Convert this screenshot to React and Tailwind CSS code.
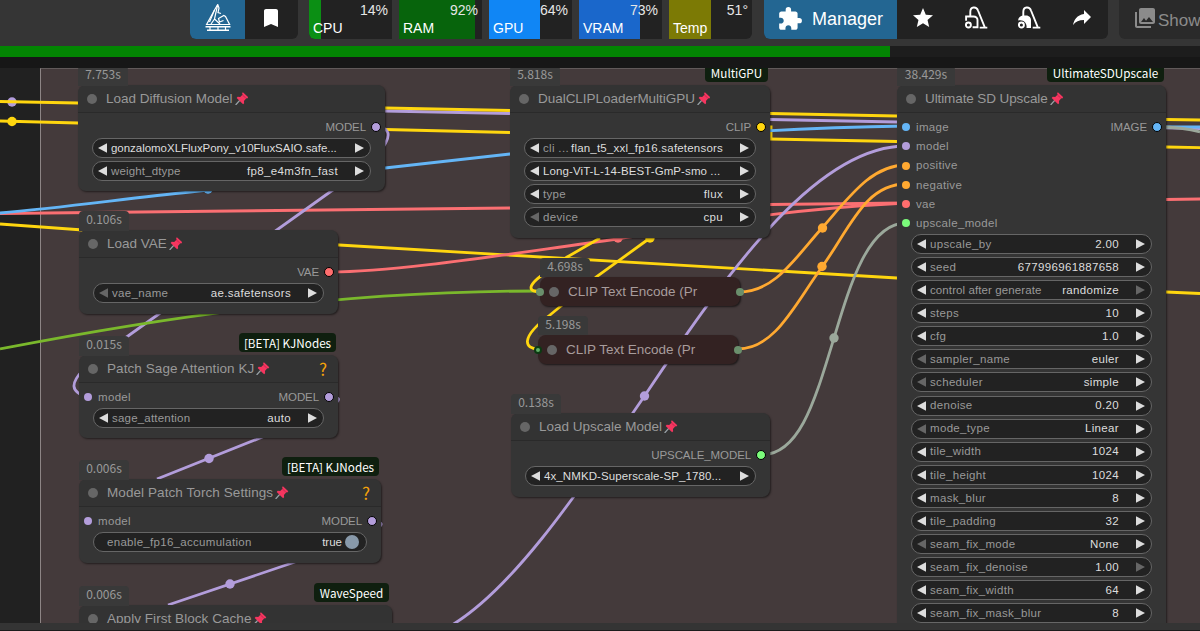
import clsx from "clsx";
import { MdBookmark, MdExtension, MdPhotoLibrary, MdStar } from "react-icons/md";

const monitors = [
  { label: "CPU", value: "14%", fill: 14, color: "bg-[#0b8f14]" },
  { label: "RAM", value: "92%", fill: 92, color: "bg-[#07640c]" },
  { label: "GPU", value: "64%", fill: 61, color: "bg-[#1086f5]" },
  { label: "VRAM", value: "73%", fill: 73, color: "bg-[#1a67cb]" },
  { label: "Temp", value: "51°", fill: 51, color: "bg-[#7c7a05]" },
];

const upscaleInputs = [
  ["image", "bg-[#64b5f6]"],
  ["model", "bg-[#b39ddb]"],
  ["positive", "bg-[#ffa931]"],
  ["negative", "bg-[#ffa931]"],
  ["vae", "bg-[#ff6e6e]"],
  ["upscale_model", "bg-[#7bfb7b]"],
];

const upscaleWidgets = [
  { label: "upscale_by", value: "2.00" },
  { label: "seed", value: "677996961887658" },
  { label: "control after generate", value: "randomize", rightOff: true, labelClass: "tracking-[0.1px]" },
  { label: "steps", value: "10" },
  { label: "cfg", value: "1.0" },
  { label: "sampler_name", value: "euler", leftOff: true },
  { label: "scheduler", value: "simple", leftOff: true },
  { label: "denoise", value: "0.20" },
  { label: "mode_type", value: "Linear", leftOff: true },
  { label: "tile_width", value: "1024" },
  { label: "tile_height", value: "1024" },
  { label: "mask_blur", value: "8" },
  { label: "tile_padding", value: "32" },
  { label: "seam_fix_mode", value: "None", leftOff: true },
  { label: "seam_fix_denoise", value: "1.00", rightOff: true },
  { label: "seam_fix_width", value: "64" },
  { label: "seam_fix_mask_blur", value: "8" },
];

const YELLOW = "#ffd60f";
const PURPLE = "#b39ddb";
const BLUE = "#64b5f6";
const RED = "#fb6f72";
const ORANGE = "#ffa931";
const GREEN = "#7ab82c";
const GRAY = "#9ba89b";

// canvas links, back to front
const links = [
  [PURPLE, "M200 108 L385 111 L510 113.5 L770 119.5 L897 122 L1200 128.5"],
  [YELLOW, "M0 101.5 L78 103 L385 108 L510 110.5 L770 113.5 L897 116 L1166 119.5 L1200 120"],
  [YELLOW, "M0 121 L78 123 L385 129.5 L510 132.5 L770 139 L897 141.5 L1166 147 L1200 147.7"],
  [YELLOW, "M761 127 H771 V138"],
  [RED, "M0 213.5 L510 208 L770 204.5 L906 203"],
  [RED, "M1166 199.5 L1200 199"],
  [BLUE, "M0 213 C60 208 130 198 190 192 L208 190 L385 168 L510 154 C600 144 740 128 906 126"],
  [YELLOW, "M0 224 L83 230 L339 245 L897 278 L1166 292 L1200 293.5"],
  [RED, "M330 272 C400 272 520 252 618 239 C700 226 770 210 906 203"],
  [PURPLE, "M376 127 C397 127 396 148 330 192 L128 336 C98 356 50 388 88 397"],
  [GREEN, "M0 349 C150 320 330 291 540 291"],
  [PURPLE, "M330 397 C350 397 338 407 260 438 L157 479"],
  [PURPLE, "M373 522 C393 522 380 532 292 563 L168 605"],
  [PURPLE, "M452 625 C510 590 570 505 644.5 396 C735 260 820 146 906 146"],
  [YELLOW, "M600 238 L566.7 257.3 L545 273 C525 287 529 292 541 291.7"],
  [YELLOW, "M650 238 L596.7 276.7 L550 315 C519 338 525 349 538 349"],
  [ORANGE, "M739 292 C775 292 795 258 822 228 C850 196 872 165 906 165"],
  [ORANGE, "M738 349 C775 349 795 304 822 267 C850 228 865 184 906 184"],
  [GRAY, "M761 455 C800 455 815 400 834 338 C850 285 868 223 906 223"],
  [BLUE, "M1157 127 H1200"],
  [GRAY, "M1157 127 C1180 127 1190 129 1200 132"],
];

const linkDots = [
  [YELLOW, 12, 121.5],
  [BLUE, 208, 189],
  [RED, 618, 238],
  [YELLOW, 650, 238],
  [PURPLE, 209, 458.5],
  [PURPLE, 230, 584],
  [PURPLE, 644.5, 396],
  [ORANGE, 822.5, 228],
  [ORANGE, 822, 266.5],
  [GRAY, 834, 338],
];

const Pin = () => (
  <svg viewBox="0 0 13 13" className="ml-0.5 size-[13.5px] shrink-0">
    <path d="M0.6 12.4 L5 7.6" stroke="#9aa3a8" strokeWidth="1.3" />
    <path
      d="M7.6 0.3 L12.8 5 L11.8 6.2 L10.9 6 L8.6 8.6 L8.8 10.8 L7.8 11.8 L1.6 5.7 L2.6 4.6 L5 4.8 L7.4 2.5 L6.8 1.2 Z"
      fill="#f5365f"
    />
    <path d="M7 2.8 L10.3 5.7" stroke="#b81e4b" strokeWidth="0.7" />
  </svg>
);

const Arrow = ({ right, off }) => (
  <svg viewBox="0 0 9 10" className="h-2.5 w-[9px] shrink-0">
    <path d={right ? "M0 0.2 L9 5 L0 9.8 Z" : "M9 0.2 L0 5 L9 9.8 Z"} fill={off ? "#666" : "#ddd"} />
  </svg>
);

const pill = "flex h-[20px] -mb-[0.75px] items-center rounded-full border border-[#666] bg-[#222]";

const Widget = ({ label, value, leftOff, rightOff, labelClass = "tracking-[0.33px]", valueClass = "tracking-[0.35px]" }) => (
  <div className={clsx(pill, "pr-1.5 pl-[5px]")}>
    <Arrow off={leftOff} />
    {label && <span className={clsx("ml-1 pt-px text-[#999]", labelClass)}>{label}</span>}
    <span className={clsx("mr-[17px] pt-px text-[#ddd]", label ? "ml-auto" : "ml-1 min-w-0 flex-1", valueClass)}>
      {value}
    </span>
    <Arrow right off={rightOff} />
  </div>
);

const Slots = ({ input, inputColor, output, outputColor }) => (
  <div className="flex h-[19.25px] items-center px-[5px] text-[#999]">
    {input && (
      <>
        <span className={clsx("size-2 rounded-full", inputColor)} />
        <span className="ml-1.5 pt-px tracking-[0.33px]">{input}</span>
      </>
    )}
    {output && (
      <>
        <span className="mr-[5px] ml-auto pt-px tracking-[-0.1px]">{output}</span>
        <span className={clsx("-mr-px size-2.5 rounded-full border border-black", outputColor)} />
      </>
    )}
  </div>
);

const Badge = ({ className, children }) => (
  <div
    className={clsx(
      "absolute flex h-[19px] items-center justify-center rounded-[4px] bg-[#0f1f0f] font-['Noto_Sans_CJK_SC',sans-serif] text-[11.7px] whitespace-nowrap text-white",
      className
    )}
  >
    {children}
  </div>
);

const Node = ({ className, time, timeClass = "w-[50px]", badge, badgeClass, title, titleClass, help, children }) => (
  <section
    className={clsx(
      "absolute rounded-lg bg-[#353535] text-[11.5px] leading-none whitespace-nowrap shadow-[1px_1px_2px_rgba(0,0,0,0.5)]",
      className
    )}
  >
    <div
      className={clsx(
        "absolute -top-[19px] left-0 flex h-5 items-center justify-center rounded-t-[4px] bg-[#393939] pb-[5px] font-['Noto_Sans_CJK_SC',sans-serif] text-[12px] text-[#999]",
        timeClass
      )}
    >
      {time}
    </div>
    {badge && <Badge className={clsx("-top-[22px]", badgeClass)}>{badge}</Badge>}
    <header className="flex h-7 items-center rounded-t-lg border-b border-[#2a2a2a] bg-[#333] pl-[9px]">
      <span className="size-2.5 shrink-0 rounded-full bg-[#666]" />
      <span className={clsx("ml-[9px] pt-px text-[13.5px] text-[#999]", titleClass)}>{title}</span>
      <Pin />
      {help && (
        <span className="mr-[11px] ml-auto font-['Noto_Sans_CJK_SC',sans-serif] text-[17px] text-[#f5a30a]">?</span>
      )}
    </header>
    <div className="pt-[4.5px]">{children}</div>
  </section>
);

const Widgets = ({ children }) => <div className="flex flex-col gap-[3.84px] px-3.5 pt-px">{children}</div>;

const EncodeNode = ({ className, time, ring }) => (
  <section className={clsx("absolute h-[29px] w-[200px] rounded-lg bg-[#332222] shadow-[1px_1px_2px_rgba(0,0,0,0.6)]", className)}>
    <div className="absolute -top-[19px] left-0 flex h-[19px] w-[50px] items-center justify-center rounded-t-[4px] bg-[#393939] pb-[3px] font-['Noto_Sans_CJK_SC',sans-serif] text-[12px] leading-none text-[#999]">
      {time}
    </div>
    <div className="flex h-full items-center">
      <span
        className={clsx(
          "-ml-1 size-2 shrink-0 rounded-full",
          ring ? "border-2 border-[#0c3a12] bg-[#5fae66]" : "bg-[#6a8f6c]"
        )}
      />
      <span className="ml-[5px] size-2.5 shrink-0 rounded-full bg-[#666]" />
      <span className="ml-[9px] pt-px text-[13.5px] leading-none text-[#a79c9c]">CLIP Text Encode (Pr</span>
      <span className="-mr-1 ml-auto size-2 shrink-0 rounded-full bg-[#6a8f6c]" />
    </div>
  </section>
);

const Vacuum = ({ filled }) => (
  <svg viewBox="0 0 24 24" className="size-6" fill="none" stroke="#fff" strokeWidth="1.9">
    <path d="M6.3 10 V6 C6.3 0.4 12.4 0.2 14 4.5 L20.8 21.4 M15.7 21.6 H23.3" />
    {filled ? (
      <path d="M1.2 14.500 C1.2 11 4 9.5 7 9.5 H9 C12.500 9.500 14 12 14 14 V22 H9.500 C10.500 17 6 13 1.2 14.500 Z" fill="#fff" stroke="none" />
    ) : (
      <path d="M2.1 14.8 V10.5 H9.5 C12 10.500 13.500 12 13.5 14 V21.2 H8.6" />
    )}
    <circle cx="4.4" cy="19" r="2.5" />
  </svg>
);

const Boat = () => (
  <svg viewBox="0 0 26 28" className="h-7 w-[26px]" fill="none" stroke="#fff" strokeWidth="1.2">
    <path d="M12.7 1.5 L9.500 7 L1.6 21.5 H24.6 L20.5 13.5 L18.8 12.5 L13.5 15.5 L14.5 19 L18.5 17.5" />
    <path d="M12.7 1.5 L9.500 16 L6 21 M12.7 1.5 L14 5 L13 9.5 L16 10.5 M9.5 16 L15 21 M9.5 7 L4.5 19" />
    <path d="M0.5 23.8 H25.5 M2 27.2 H24" strokeWidth="1.4" />
    <path d="M5 24 V27 M13 24 V27 M20.5 24 V27" />
  </svg>
);

const Toolbar = () => (
  <header className="flex h-[46px] shrink-0 items-start bg-[#353535] pl-[190px] text-white">
    <div className="flex h-[39px] overflow-hidden rounded-b-md bg-[#222]">
      <button className="flex w-[55px] justify-center bg-[#236692] pt-[3px]">
        <Boat />
      </button>
      <button className="flex w-[53px] justify-center pt-1.5 pr-0.5">
        <MdBookmark className="size-6" />
      </button>
    </div>

    <div className="ml-[11px] flex h-[39px] gap-[7px] overflow-hidden rounded-b-md">
      {monitors.map((m) => (
        <div key={m.label} className="relative flex w-[83px] flex-col bg-[#222] px-1 pt-px text-[14px] leading-[18px]">
          <div className={clsx("absolute inset-y-0 left-0", m.color)} style={{ width: `${m.fill}%` }} />
          <span className="relative self-end text-[#e6e6e6]">{m.value}</span>
          <span className="relative">{m.label}</span>
        </div>
      ))}
    </div>

    <div className="ml-3 flex h-[39px] overflow-hidden rounded-b-md bg-[#222]">
      <button className="flex w-[133px] items-center bg-[#236692] pb-0.5 pl-[13px] text-[18px]">
        <MdExtension className="mr-[9px] size-[26px]" />
        <span className="pt-px">Manager</span>
      </button>
      <div className="flex w-[211px] items-center pb-[3px]">
        <MdStar className="ml-[14px] size-6" />
        <span className="ml-[29px]">
          <Vacuum />
        </span>
        <span className="ml-[29px]">
          <Vacuum filled />
        </span>
        <svg viewBox="0 0 24 24" className="ml-[29px] size-6" fill="#fff">
          <path d="M21 11 14 4v4C7 9 4 14 3 19c2.500-3.500 6-5.100 11-5.100V18z" />
        </svg>
      </div>
    </div>

    <div className="ml-[11px] flex h-[39px] flex-1 items-center overflow-hidden rounded-bl-md bg-[#2a2a2a] pl-3.5 text-[17px] text-[#8b8b8b]">
      <MdPhotoLibrary className="mb-1 size-6 shrink-0" />
      <span className="ml-px pt-0.5">Show</span>
    </div>
  </header>
);

const Canvas = () => (
  <main className="relative h-[555px] shrink-0 overflow-hidden bg-[#212121]">
    <div className="ml-10 h-full border-t border-l border-t-[#615a5a] border-l-[#8d8585] bg-[#443a3b]" />
    <svg viewBox="0 68 1200 555" className="absolute inset-0 h-[555px] w-[1200px]" fill="none" strokeWidth="2.8">
      <circle cx="12" cy="102" r="4.7" fill={PURPLE} />
      {links.map(([color, d]) => (
        <path key={d} d={d} stroke={color} />
      ))}
      {linkDots.map(([color, x, y]) => (
        <circle key={`${x}-${y}`} cx={x} cy={y} r="4.7" fill={color} />
      ))}
    </svg>

    <Node className="top-[17px] left-[78px] h-[106px] w-[307px]" time="7.753s" title="Load Diffusion Model">
      <Slots output="MODEL" outputColor="bg-[#b39ddb]" />
      <Widgets>
        <Widget value="gonzalomoXLFluxPony_v10FluxSAIO.safe..." valueClass="tracking-[-0.03px]" />
        <Widget label="weight_dtype" value="fp8_e4m3fn_fast" labelClass="tracking-[0.15px]" />
      </Widgets>
    </Node>

    <Node className="top-[162px] left-[79px] h-[84px] w-[259px]" time="0.106s" title="Load VAE">
      <Slots output="VAE" outputColor="bg-[#ff6e6e]" />
      <Widgets>
        <Widget label="vae_name" value="ae.safetensors" leftOff />
      </Widgets>
    </Node>

    <Node
      className="top-[287px] left-[79px] h-[83px] w-[259px]"
      time="0.015s"
      title="Patch Sage Attention KJ"
      titleClass="tracking-[0.08px]"
      badge="[BETA] KJNodes"
      badgeClass="right-0.5 w-[97px]"
      help
    >
      <Slots input="model" inputColor="bg-[#b39ddb]" output="MODEL" outputColor="bg-[#b39ddb]" />
      <Widgets>
        <Widget label="sage_attention" value="auto" labelClass="tracking-[0.2px]" />
      </Widgets>
    </Node>

    <Node
      className="top-[411px] left-[79px] h-[84px] w-[302px]"
      time="0.006s"
      title="Model Patch Torch Settings"
      titleClass="tracking-[0.08px]"
      badge="[BETA] KJNodes"
      badgeClass="right-0.5 w-[97px]"
      help
    >
      <Slots input="model" inputColor="bg-[#b39ddb]" output="MODEL" outputColor="bg-[#b39ddb]" />
      <Widgets>
        <div className={clsx(pill, "pr-[7px] pl-[13px]")}>
          <span className="pt-px tracking-[0.3px] text-[#999]">enable_fp16_accumulation</span>
          <span className="ml-auto pt-px text-[#ddd]">true</span>
          <span className="ml-[3px] size-3.5 rounded-full bg-[#8899aa]" />
        </div>
      </Widgets>
    </Node>

    <Node
      className="top-[537px] left-[79px] h-[90px] w-[313px]"
      time="0.006s"
      title="Apply First Block Cache"
      titleClass="tracking-[0.05px]"
      badge="WaveSpeed"
      badgeClass="right-[3px] w-[75px]"
    />

    <Node
      className="top-[17px] left-[510px] h-[153px] w-[260px]"
      time="5.818s"
      title="DualCLIPLoaderMultiGPU"
      titleClass="tracking-[-0.03px]"
      badge="MultiGPU"
      badgeClass="right-0.5 w-[63px]"
    >
      <Slots output="CLIP" outputColor="bg-[#ffd60f]" />
      <Widgets>
        <Widget label="cli ..." value="flan_t5_xxl_fp16.safetensors" valueClass="tracking-[0.2px]" />
        <Widget value="Long-ViT-L-14-BEST-GmP-smo ..." valueClass="tracking-[0.1px]" />
        <Widget label="type" value="flux" />
        <Widget label="device" value="cpu" leftOff />
      </Widgets>
    </Node>

    <EncodeNode className="top-[209px] left-[540px]" time="4.698s" />
    <EncodeNode className="top-[267px] left-[538px]" time="5.198s" ring />

    <Node className="top-[345px] left-[511px] h-[84px] w-[259px]" time="0.138s" title="Load Upscale Model">
      <Slots output="UPSCALE_MODEL" outputColor="bg-[#7bfb7b]" />
      <Widgets>
        <Widget value="4x_NMKD-Superscale-SP_1780..." valueClass="tracking-[0.1px]" />
      </Widgets>
    </Node>

    <Node
      className="top-[17px] left-[897px] h-[560px] w-[269px]"
      time="38.429s"
      timeClass="w-[58px]"
      title="Ultimate SD Upscale"
      titleClass="tracking-[-0.1px]"
      badge="UltimateSDUpscale"
      badgeClass="right-0.5 w-[117px]"
    >
      {upscaleInputs.map(([name, color], i) => (
        <Slots
          key={name}
          input={name}
          inputColor={color}
          output={i === 0 ? "IMAGE" : null}
          outputColor="bg-[#64b5f6]"
        />
      ))}
      <Widgets>
        {upscaleWidgets.map((w) => (
          <Widget key={w.label} {...w} />
        ))}
      </Widgets>
    </Node>
  </main>
);

export default function App() {
  return (
    <div className="flex h-[631px] w-[1200px] flex-col overflow-hidden bg-[#171717] font-['Liberation_Sans',Arial,sans-serif]">
      <Toolbar />
      <div className="h-[11px] shrink-0 bg-[#1d1d1d]">
        <div className="h-full w-[890px] bg-[#038503]" />
      </div>
      <div className="h-[11px] shrink-0 bg-[#171717]" />
      <Canvas />
      <footer className="flex-1 border-b border-[#1c1c1c] bg-[#343434]" />
    </div>
  );
}
